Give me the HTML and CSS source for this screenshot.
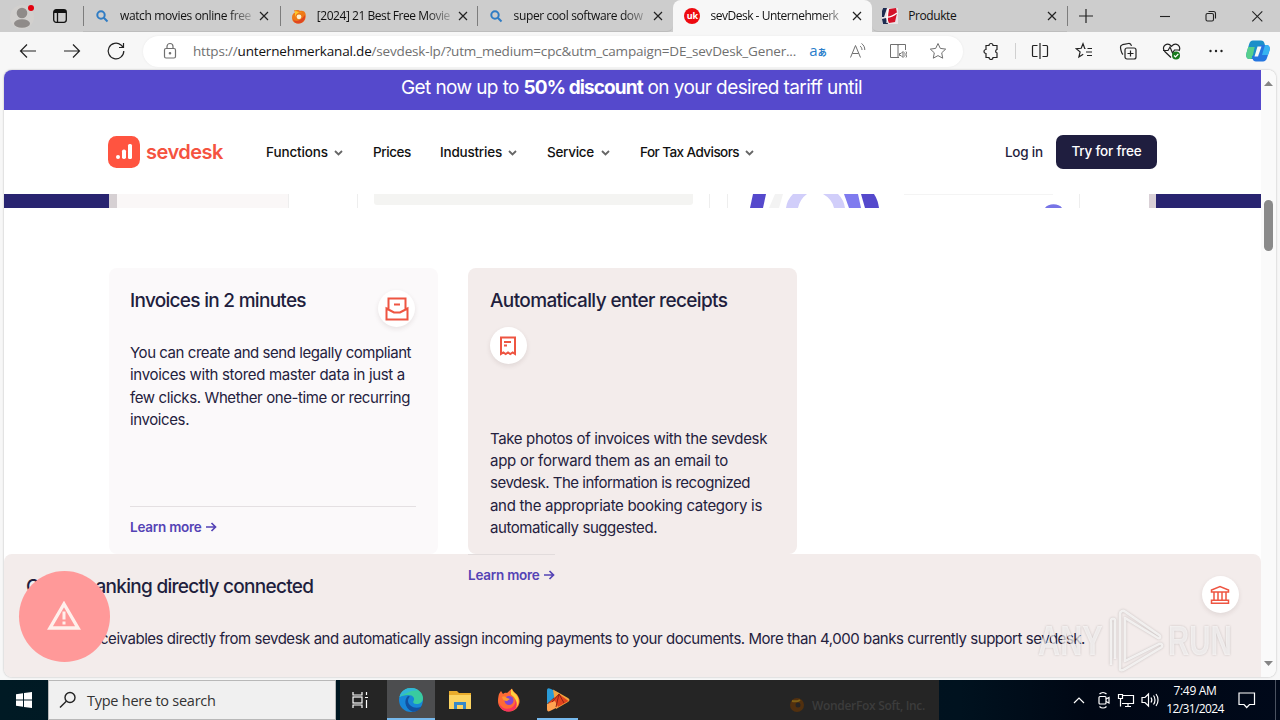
FILE: index.html
```html
<!DOCTYPE html>
<html lang="en">
<head>
<meta charset="utf-8">
<title>sevDesk - Unternehmerkanal</title>
<link rel="stylesheet" href="styles.css">
</head>
<body>
<header class="tabbar">
  <div class="profile">
    <svg width="28" height="28" viewBox="0 0 28 28"><circle cx="14" cy="15" r="12" fill="#d2d0ce"/><circle cx="14" cy="11" r="5.300" fill="#8f8b89"/><ellipse cx="14" cy="21.500" rx="8" ry="4.300" fill="#8f8b89"/><circle cx="23" cy="6" r="3" fill="#e3000f"/></svg>
  </div>
  <div class="workspaces">
    <svg width="16" height="16" viewBox="0 0 16 16" fill="none" stroke="#111" stroke-width="1.300"><rect x="1.700" y="1.700" width="12.600" height="12.600" rx="2.500"/><path d="M5.500 5v9"/><path d="M2 3.500h12" stroke-width="3"/></svg>
  </div>
  <div class="tab first">
    <svg class="fav" width="16" height="16" viewBox="0 0 16 16" fill="none" stroke="#2f7cc4" stroke-width="2"><circle cx="7" cy="7" r="3.700"/><path d="M9.800 9.800 13.500 13.500"/></svg>
    <span class="label t1">watch movies online free</span>
    <svg class="x" width="10" height="10" viewBox="0 0 10 10"><path d="M1 1l8 8M9 1l-8 8"/></svg>
  </div>
  <div class="tab">
    <svg class="fav" width="16" height="16" viewBox="0 0 16 16"><path d="M3 2c3 1 4-1 6 1 5-1 6.500 3 5.500 7-1 4-4 5.500-7 5.500C3 15.500 1 13 1 9.500 1 7 2 5.500 4 4.500z" fill="#ee7a18"/><path d="M2 11c2 3 7 3 12-4 1 5-3 8.500-6.500 8.500C4.500 15.500 2.500 14 2 11z" fill="#e04622"/><circle cx="8" cy="8.800" r="2.400" fill="#fff3d0"/><path d="M4 3c3 0 4 2 7 1-4 0-6 2-7 5z" fill="#ffc928"/></svg>
    <span class="label t2">[2024] 21 Best Free Movie</span>
    <svg class="x" width="10" height="10" viewBox="0 0 10 10"><path d="M1 1l8 8M9 1l-8 8"/></svg>
  </div>
  <div class="tab last-idle">
    <svg class="fav" width="16" height="16" viewBox="0 0 16 16" fill="none" stroke="#2f7cc4" stroke-width="2"><circle cx="7" cy="7" r="3.700"/><path d="M9.800 9.800 13.500 13.500"/></svg>
    <span class="label t3">super cool software dow</span>
    <svg class="x" width="10" height="10" viewBox="0 0 10 10"><path d="M1 1l8 8M9 1l-8 8"/></svg>
  </div>
  <div class="tab active">
    <span class="fav uk">uk</span>
    <span class="label t4">sevDesk - Unternehmerk</span>
    <svg class="x" width="10" height="10" viewBox="0 0 10 10"><path d="M1 1l8 8M9 1l-8 8"/></svg>
  </div>
  <div class="tab right">
    <svg class="fav" width="16" height="16" viewBox="0 0 16 16"><path d="M0 0h16v16H0z" fill="#e9e3e6"/><path d="M1 0h4L2 9H0V3zM0 11l4-1 2 6H1z" fill="#1d2c50"/><path d="M7 1l7-1 1 5-2 9-6 1-2-5z" fill="#d41228"/><path d="M4 9c4 1 7-1 11-4M6 1 5 15" stroke="#fff" stroke-width="1.200" fill="none"/></svg>
    <span class="label t5">Produkte</span>
    <svg class="x" width="10" height="10" viewBox="0 0 10 10"><path d="M1 1l8 8M9 1l-8 8"/></svg>
  </div>
  <div class="newtab"><svg width="16" height="16" viewBox="0 0 16 16" stroke="#222" stroke-width="1.200"><path d="M8 1v14M1 8h14"/></svg></div>
  <div class="winbtns">
    <svg width="46" height="32" viewBox="0 0 46 32"><path d="M18 16.500h10"/></svg>
    <svg width="46" height="32" viewBox="0 0 46 32"><rect x="18" y="13.500" width="7.500" height="7.500" rx="1.500"/><path d="M20.500 11.500h5a2 2 0 0 1 2 2v5"/></svg>
    <svg width="46" height="32" viewBox="0 0 46 32"><path d="M18.300 11.300l10 10M28.300 11.300l-10 10"/></svg>
  </div>
</header>

<div class="toolbar">
  <span class="tool"><svg width="20" height="20" viewBox="0 0 20 20"><path d="M18 10H2.500M9 3.500 2.500 10 9 16.500"/></svg></span>
  <span class="tool"><svg width="20" height="20" viewBox="0 0 20 20"><path d="M2 10h15.500M11 3.500l6.500 6.500-6.500 6.500"/></svg></span>
  <span class="tool"><svg width="20" height="20" viewBox="0 0 20 20"><path d="M17.800 10A7.800 7.800 0 1 1 15 4l2 2M17.500 2v4.500H13"/></svg></span>
  <div class="address">
    <svg class="lock" width="16" height="18" viewBox="0 0 16 18"><rect x="2.500" y="6.500" width="11" height="9.500" rx="1.500"/><path d="M5 6.500V4.500a3 3 0 0 1 6 0v2"/><circle cx="8" cy="11.300" r=".7"/></svg>
    <span class="url">https://<b>unternehmerkanal.de</b>/sevdesk-lp/?utm_medium=cpc&amp;utm_campaign=DE_sevDesk_Gener...</span>
    <span class="act translate"><i>a</i><i class="jp">あ</i></span>
    <span class="act"><svg width="18" height="18" viewBox="0 0 18 18"><path d="M1.500 15.500 6.500 3.500l5 12M3.300 11.500h6.400M11 4c1.300 1 2 2.300 2 4M12.500 1.500c2.200 1.500 3.300 3.700 3.300 6.500"/></svg></span>
    <span class="act"><svg width="18" height="18" viewBox="0 0 18 18"><path d="M9 3v12.500H1.500V2.500H9M9 3.500V2.500h7.500V8M9 15.500h1"/><path d="M10.500 11.500h1.500l2-2v6l-2-2h-1.500zM15.500 10.500c.8 1 .8 3 0 4M17 9.500c1.200 1.500 1.200 4.500 0 6"/></svg></span>
    <span class="act"><svg width="18" height="18" viewBox="0 0 18 18"><path d="M9 1.500l2.300 4.900 5.400.7-4 3.700 1 5.400L9 13.600l-4.700 2.600 1-5.400-4-3.700 5.400-.7z"/></svg></span>
  </div>
  <span class="tool ext"><svg width="18" height="18" viewBox="0 0 18 18"><path d="M4 3.500h3a2 2 0 0 1 4 0h4v4a1.800 1.800 0 0 0 0 3.500v4.500h-4a2 2 0 0 1-4 0H4V11.500a2 2 0 0 1 0-4z"/></svg></span>
  <span class="sep"></span>
  <span class="tool"><svg width="18" height="18" viewBox="0 0 18 18"><path d="M6.500 3.500h-4a1 1 0 0 0-1 1v9a1 1 0 0 0 1 1h4M11.500 3.500h4a1 1 0 0 1 1 1v9a1 1 0 0 1-1 1h-4M9 1v16"/></svg></span>
  <span class="tool"><svg width="18" height="18" viewBox="0 0 18 18"><path d="M10.500 6.500h-.8L8 1.800 6.200 6.300l-4.900.4 3.800 3.200L3.900 15l4.300-2.800M12.500 6.500h4.500M11 10h6M12 13.500h5"/></svg></span>
  <span class="tool"><svg width="18" height="18" viewBox="0 0 18 18"><rect x="6" y="6" width="11" height="11" rx="2"/><path d="M11.500 8.500v6M8.500 11.500h6M4 12.500c-1.500-1-2.500-5.500-2.500-7.500C1.500 3.500 2.500 3 3.500 2.700l6-1.200c1.500-.2 2.500.5 3 2.300"/></svg></span>
  <span class="tool"><svg width="20" height="18" viewBox="0 0 20 18"><path d="M9 15.500 3 9.800C.8 7.500 1 4.500 3.200 3c2-1.400 4.500-.8 6.300 1.300C11.300 2.200 14 1.600 16 3c1.800 1.500 2.200 3.700 1 6M1 8.500h5l2-3.500 2.500 6L12.500 8H17"/><circle cx="14" cy="13.500" r="4" fill="#187a1d" stroke="none"/><path d="M12 13.500l1.500 1.500 2.800-3" stroke="#fff"/></svg></span>
  <span class="tool"><svg width="18" height="18" viewBox="0 0 18 18"><g fill="#222" stroke="none"><circle cx="3.500" cy="9" r="1.200"/><circle cx="9" cy="9" r="1.200"/><circle cx="14.500" cy="9" r="1.200"/></g></svg></span>
  <span class="tool copilot"><svg width="26" height="24" viewBox="0 0 26 24"><g stroke="none"><path d="M8 1.500h8c2 0 3 1 3.500 3L20.500 8h-4c-2 0-3 1-3.500 3l-2 6c-.6 2-1.500 3-3 3H5c-3 0-4.500-2-3.500-6L4 5.500C4.700 3 6 1.500 8 1.500z" fill="#1b8fc9"/><path d="M1.500 14 3.200 8h6.500l-2 9c-.4 2-1.200 3-2.700 3-3 0-4.500-2-3.500-6z" fill="#57cf8c"/><path d="M18 22.500h-7c-2 0-3-1-3.500-3L6.800 17c2.500 0 3.500-1 4.200-3l2.300-6c.6-1.500 1.700-2 3.200-2H21c3 0 4.500 2 3.500 5.500L22 19c-.7 2.300-2 3.500-4 3.500z" fill="#2576e0"/><path d="M20 6h1c3 0 4.500 2 3.500 5.500L23 16h-6z" fill="#36b3f1"/><path d="M12.500 7.500h4l-3.500 10H9.500z" fill="#f7f7f7"/></g></svg></span>
</div>

<main class="viewport">
  <div class="page">
    <div class="promo"><span>Get now up to <b>50% discount</b> on your desired tariff until</span></div>
    <nav class="nav">
      <svg class="mark" width="32" height="32" viewBox="0 0 32 32"><rect width="32" height="32" rx="8.500" fill="#ff5440"/><g fill="#fff"><rect x="8" y="19" width="4" height="4" rx="2"/><rect x="14" y="13.500" width="4" height="9.500" rx="1.800"/><rect x="20" y="8" width="4" height="15" rx="1.500"/></g></svg>
      <span class="brand">sevdesk</span>
      <a class="item n1">Functions</a><svg class="chev" width="9" height="6" viewBox="0 0 9 6"><path d="M1 1l3.500 3.500L8 1"/></svg>
      <a class="item n2">Prices</a>
      <a class="item n3">Industries</a><svg class="chev" width="9" height="6" viewBox="0 0 9 6"><path d="M1 1l3.500 3.500L8 1"/></svg>
      <a class="item n4">Service</a><svg class="chev" width="9" height="6" viewBox="0 0 9 6"><path d="M1 1l3.500 3.500L8 1"/></svg>
      <a class="item n5">For Tax Advisors</a><svg class="chev" width="9" height="6" viewBox="0 0 9 6"><path d="M1 1l3.500 3.500L8 1"/></svg>
      <a class="login">Log in</a>
      <a class="try">Try for free</a>
    </nav>
    <svg class="hero" width="1257" height="14" viewBox="0 0 1257 14">
      <rect width="1257" height="14" fill="#fff"/>
      <rect width="106" height="14" fill="#282470"/><rect x="105" width="8" height="14" fill="#d6d0d3"/><rect x="113" width="172" height="14" fill="#faf7f7"/>
      <path d="M284.500 0v14M353.500 0v14M705.500 0v14M723.500 0v14M1075.500 0v14" stroke="#eeeeee"/>
      <rect x="370" y="-4" width="319" height="15" rx="3" fill="#f4f4f2"/>
      <path d="M749 0h13l-3 14h-13z" fill="#5549cc"/><path d="M771 0h8l-4 14h-10z" fill="#f3f3f3"/>
      <path d="M789 0h14q-7 5-9 14h-12q1-8 7-14z" fill="#d1cefa"/><path d="M819 0h15q6 6 7 14h-11q-2-9-11-14z" fill="#d1cefa"/>
      <path d="M840 0h14l3 14h-12z" fill="#7f7bef"/><path d="M857 0h13q4 6 5 14h-14z" fill="#5549cc"/>
      <path d="M900 .5h149" stroke="#f4f4f4"/><path d="M1041 14c3-5 14-5 17 0z" fill="#7774e6"/>
      <rect x="1145" width="8" height="14" fill="#d9d0d6"/><rect x="1152" width="105" height="14" fill="#282470"/>
    </svg>
    <div class="cards">
      <article class="card light">
        <div class="head">
          <h3 class="h1">Invoices in 2 minutes</h3>
          <span class="bubble"><svg width="24" height="26" viewBox="0 0 24 26"><path d="M3.500 13V2.500h17V13M1.500 12.500 9 16.500h6l7.500-4V23.500h-21zM9 8.500h6"/></svg></span>
        </div>
        <p><span class="p1">You can create and send legally compliant</span><span class="p2">invoices with stored master data in just a</span><span class="p3">few clicks. Whether one-time or recurring</span><span class="p3">invoices.</span></p>
        <a class="more">Learn more <svg width="11" height="10" viewBox="0 0 11 10"><path d="M0 5h9.500M5.500 1l4 4-4 4"/></svg></a>
      </article>
      <article class="card tinted">
        <h3 class="h2">Automatically enter receipts</h3>
        <span class="bubble"><svg width="18" height="20" viewBox="0 0 18 20"><path d="M2 1.500h14V18l-2.300-1.500L11.300 18 9 16.500 6.700 18l-2.400-1.500L2 18zM5 6h7M5 9.500h3"/></svg></span>
        <p><span class="q1">Take photos of invoices with the sevdesk</span><span class="q2">app or forward them as an email to</span><span class="q3">sevdesk. The information is recognized</span><span class="q4">and the appropriate booking category is</span><span class="q5">automatically suggested.</span></p>
        <a class="more overlap">Learn more <svg width="11" height="10" viewBox="0 0 11 10"><path d="M0 5h9.500M5.500 1l4 4-4 4"/></svg></a>
      </article>
    </div>
    <section class="bank">
      <div class="head">
        <h3 class="h3">Online banking directly connected</h3>
        <span class="bubble"><svg width="20" height="20" viewBox="0 0 20 20" class="thin"><path d="M1.500 7V5L10 1.500 18.500 5v2zM4 7v8M8 7v8M12 7v8M16 7v8M1.500 15.200h17v3h-17z"/></svg></span>
      </div>
      <p><span class="lead">Collect re</span>ceivables directly from sevdesk and automatically assign incoming payments to your documents. More than 4,000 banks currently support sevdesk.</p>
    </section>
  </div>
  <div class="scroll">
    <svg width="9" height="5" viewBox="0 0 9 5"><path d="M0 5 4.500 0 9 5z" fill="#858585"/></svg>
    <span class="thumb"></span>
    <svg class="down" width="9" height="5" viewBox="0 0 9 5"><path d="M0 0 4.500 5 9 0z" fill="#858585"/></svg>
  </div>
  <div class="alert"><svg width="34" height="30" viewBox="0 0 34 30"><path d="M17 3 31 27H3z" fill="none" stroke="#fff0ec" stroke-width="3.400"/><path d="M17 10.500v8M17 20.500v3" stroke="#fff0ec" stroke-width="3"/></svg></div>
  <div class="watermark"><span>ANY</span>
    <svg width="60" height="66" viewBox="0 0 60 66" fill="none" stroke-linejoin="round"><path d="M5 57V13c0-3 4-3 4 0v38M14 61V6c0-3 3-4 5-2.500L53 27c2 1.500 1 4-1 3L19 10v43l34-17c3-1 4 2 2 3.500L19 61c-2 1.500-5 2-5 0"/></svg>
    <span class="run">RUN</span></div>
</main>

<footer class="taskbar">
  <span class="start"><svg width="16" height="16" viewBox="0 0 16 16" fill="#fff"><path d="M0 2.300 7 1.300v6.200H0zM8 1.100 16 0v7.500H8zM0 8.500h7v6.200l-7-1zM8 8.500h8V16l-8-1.100z"/></svg></span>
  <div class="search"><svg width="18" height="18" viewBox="0 0 18 18" fill="none" stroke="#222" stroke-width="1.400"><circle cx="11" cy="6.500" r="5"/><path d="M7.300 10.200 1 16.500"/></svg><span>Type here to search</span></div>
  <div class="apps">
    <span class="app"><svg width="18" height="18" viewBox="0 0 18 18" fill="none" stroke="#fff" stroke-width="1.200"><path d="M2 1v3h9V1M2 17v-3h9v3"/><rect x="2" y="6" width="9" height="6"/><path d="M15.500 1v3M15.500 9v8M14 6.500h3"/></svg></span>
    <span class="app current"><svg width="26" height="26" viewBox="0 0 26 26"><circle cx="13" cy="13" r="12" fill="#1786d8"/><path d="M1.500 10C3 4 8 1 13 1c7 0 12 5 12 10 0 4-3 6-6.500 6-3 0-4-1.500-3-3 2-3-1-6-5-6-4 0-7 1-9 2z" fill="#39cba0"/><path d="M1.500 10C3 4 8 1 13 1c3 0 5 .8 7 2.300C14 3 8 6 1.500 10z" fill="#31b6d8"/><path d="M10 9c-4 3-4 12 4 15.500 4 1 8-2 9.500-5-6 3-13 0-13.500-5.500 0-2 1-4 2-4.500z" fill="#1251a0"/></svg></span>
    <span class="app"><svg width="22" height="20" viewBox="0 0 22 20"><path d="M0 1h8l2 2h12v16H0z" fill="#e9ac2c"/><path d="M0 5h22v14H0z" fill="#fcd462"/><path d="M5 19v-7h12v7h-3v-4H8v4z" fill="#3789c9"/></svg></span>
    <span class="app"><svg width="24" height="24" viewBox="0 0 24 24"><path d="M2 6l2-3 2 3c1-1 3-1.500 4-1l5-4.500c1 3 3 4 5 6 3 4 3.500 8 1 12-2 3.500-5.500 5-9 5C5 23.500 1 18.500 1 13c0-3 .5-5 1-7z" fill="#ff6a35"/><path d="M14 1l1 .5c1 3 4 4 5.500 7 2.500 5 .5 9-1.500 11 1-7-1-10-5-13z" fill="#ffd13d"/><path d="M2 15c2 5 7 7 12 5 4-2 5-6 4-9 3 4 2 9-2 11.500-6 3-13-.5-14-7.500z" fill="#f7335f"/><circle cx="12" cy="12.500" r="4.500" fill="#8246d4"/><path d="M5 9c2-1 4 0 5 1l3 1-3 2c-3 0-4-1-5-4z" fill="#ff9730"/></svg></span>
    <span class="app running"><svg width="26" height="26" viewBox="0 0 26 26"><path d="M2 4c0-3 1-3.500 4-2l8 4L2 17z" fill="#2a9bd7"/><path d="M8 2.500 23 11c2 1 2 3 0 4L11 22z" fill="#f3a43d"/><path d="M3 16 14 7 23.500 14 11 21z" fill="#e2431e"/><path d="M2 17l8-3 3 6-8 4c-2 1-3 0-3-2z" fill="#ffa351"/><path d="M14 7 11 20M14 7l5 9M14 7 7 15" stroke="#8d2516" fill="none"/></svg></span>
    <span class="ghost"><svg width="16" height="16" viewBox="0 0 16 16"><circle cx="8" cy="8" r="7" fill="#51300f"/><circle cx="9" cy="8" r="2.500" fill="#252525"/><path d="M3 4q5 1 8-1" stroke="#806015" stroke-width="2" fill="none"/></svg><span>WonderFox Soft, Inc.</span></span>
  </div>
  <div class="tray">
    <svg width="12" height="8" viewBox="0 0 12 8"><path d="M1 7l5-5 5 5"/></svg>
    <svg width="14" height="18" viewBox="0 0 14 18"><rect x="2" y="5.500" width="7" height="7.500" rx="1"/><path d="M9 8l3-1.500v5.500L9 10.500M2.500 3C4.500 1 7.500 1 9.500 3M2.500 15.500c2 2 5 2 7 0"/></svg>
    <svg width="18" height="16" viewBox="0 0 18 16"><path d="M6 3.500h10.500v8H5M8 14.500h6M11 11.500v3M1.500 2.500h4v4h-4zM3.500 6.500v8"/></svg>
    <svg width="18" height="16" viewBox="0 0 18 16"><path d="M1 5.500h3L7.500 2v12L4 10.500H1zM10 5.500c1 1.500 1 3.500 0 5M12.500 3.500c2 2.500 2 6.500 0 9M15 2c2.700 3.500 2.700 8.500 0 12"/></svg>
    <div class="clock"><span class="time">7:49 AM</span><span class="date">12/31/2024</span></div>
    <svg class="notes" width="18" height="17" viewBox="0 0 18 17"><path d="M1 1h15.500v11.500h-5L8.700 15.500 6 12.500H1z"/></svg>
  </div>
</footer>
</body>
</html>
```
FILE: styles.css
```css
* { box-sizing: border-box; }
body { margin: 0; width: 1280px; height: 720px; overflow: hidden; display: flex; flex-direction: column; background: #f7f7f7; font-family: "Inter", "Liberation Sans", sans-serif; }
svg { display: block; flex: none; }
h3, p { margin: 0; font-weight: 400; }

/* Browser tabs */
.tabbar { height: 32px; flex: none; display: flex; background: #cdcdcd; font: 12px/32px "Open Sans", "Noto Sans", sans-serif; color: #111; }
.profile { width: 45px; padding: 2px 0 0 8px; }
.workspaces { width: 38px; padding: 8px 0 0 7px; }
.tab { width: 197px; height: 32px; display: flex; align-items: center; padding: 0 10px 0 10px; position: relative; border-bottom: 1px solid #bdbdbd; }
.tab.first { width: 198px; padding-left: 11px; padding-right: 12px; }
.tab::before { content: ""; position: absolute; left: -1px; top: 6px; width: 1px; height: 20px; background: #7d7d7d; }
.tab.first::before { left: 0; }
.tab.active::before, .tab.right::before { display: none; }
.tab.active { background: #f7f7f7; border: 0; border-radius: 8px 8px 0 0; width: 199px; padding-left: 11px; }
.tab.last-idle { width: 196px; border-radius: 0 0 6px 0; }
.tab.right { width: 195px; border-radius: 0 0 0 6px; padding-left: 10px; }
.fav { width: 16px; height: 16px; margin-right: 10px; flex: none; }
.uk { background: #ee0a10; border-radius: 50%; color: #fff; font: 700 9px/15px "Open Sans", sans-serif; text-align: center; }
.label { flex: 1; overflow: hidden; white-space: nowrap; margin-right: 7px; -webkit-mask-image: linear-gradient(90deg, #000 82%, rgba(0,0,0,.2)); mask-image: linear-gradient(90deg, #000 82%, rgba(0,0,0,.2)); }
.t1, .t3 { letter-spacing: -.36px; }
.t2 { letter-spacing: -.45px; }
.t4 { letter-spacing: -.48px; }
.t5 { letter-spacing: -.42px; -webkit-mask: none; mask: none; }
.x { stroke: #222; stroke-width: 1.2; }
.newtab { width: 75px; padding: 2px 0 0 10px; border-left: 1px solid #7d7d7d; height: 20px; margin-top: 6px; }
.winbtns { display: flex; fill: none; stroke: #222; stroke-width: 1.1; }

/* Navigation bar */
.toolbar { height: 38px; flex: none; display: flex; align-items: center; padding-left: 6px; fill: none; stroke: #222; stroke-width: 1.2; }
.tool { width: 44px; display: flex; justify-content: center; flex: none; }
.tool.ext { margin-left: 6px; }
.tool.copilot { width: 40px; }
.sep { width: 1px; height: 16px; background: #d0d0d0; margin: 0 2px; }
.address { width: 820px; height: 31px; margin-left: 5px; border-radius: 16px; background: #fff; display: flex; align-items: center; padding: 0 5px 0 18px; stroke: #707070; box-shadow: 0 0 2px #e6e6e6; }
.url { width: 619px; margin-right: 2px; padding-left: 16px; font: 13.5px/30px "Open Sans", "Noto Sans", sans-serif; letter-spacing: -.18px; color: #707070; white-space: nowrap; }
.url b { font-weight: 400; color: #111; }
.lock { margin-left: 1px; margin-right: -1px; }
.act { width: 40px; display: flex; justify-content: center; flex: none; stroke-width: 1; }
.translate { color: #2a7ecb; font: 15px/18px "Open Sans", "Noto Sans CJK JP", sans-serif; align-items: baseline; padding-bottom: 3px; }
.translate i { font-style: normal; }
.translate .jp { font: 700 9px/12px "Noto Sans CJK JP", sans-serif; }

/* Page viewport */
.viewport { height: 607px; flex: none; margin-left: 4px; width: 1272px; display: flex; background: #fff; border-radius: 8px; overflow: hidden; position: relative; box-shadow: 0 0 2px #aaa; }
.page { width: 1257px; display: flex; flex-direction: column; color: #1f1d3d; }
.scroll { width: 15px; background: #fafafa; display: flex; flex-direction: column; align-items: center; padding: 11px 0; }
.thumb { width: 9px; height: 51px; border-radius: 5px; background: #8a8a8a; margin: 114px 0 auto; }
.promo { height: 40px; flex: none; background: #5549cc; color: #fff; font-size: 19px; line-height: 36px; letter-spacing: -.6px; text-align: center; white-space: pre; padding-right: 2px; }
.promo b { letter-spacing: -.9px; }
.nav { height: 84px; flex: none; display: flex; align-items: center; padding: 0 104px; font-size: 13.5px; font-weight: 500; color: #111; white-space: nowrap; }
.brand { width: 120px; margin: 0 0 0 6px; color: #f5533f; font-size: 20px; font-weight: 600; letter-spacing: -.5px; padding-bottom: 1px; }
.item, .login { padding-bottom: 1px; }
.n1 { width: 62px; letter-spacing: -.12px; }
.n2 { width: 38px; letter-spacing: -.42px; margin-right: 29px; }
.n3 { width: 62px; letter-spacing: -.21px; }
.n4 { width: 48px; letter-spacing: -.28px; }
.n5 { width: 99px; letter-spacing: -.56px; }
.chev { margin: 2px 30px 0 6px; fill: none; stroke: #666; stroke-width: 1.8; }
.login { margin-left: auto; letter-spacing: -.2px; color: #1f1d3d; }
.try { width: 101px; height: 34px; margin-left: 13px; border-radius: 7px; background: #1f1e3f; color: #fff; line-height: 33px; text-align: center; letter-spacing: -.21px; }

/* Feature cards */
.cards { padding: 60px 105px 0; display: flex; gap: 30px; height: 346px; flex: none; }
.card { width: 329px; border-radius: 8px; padding: 20px 22px 0 21px; position: relative; display: flex; flex-direction: column; }
.light { background: #fbf9fa; }
.tinted { background: #f3eceb; padding-left: 22px; }
.head { display: flex; justify-content: space-between; }
h3 { font-size: 19px; font-weight: 500; line-height: 26px; white-space: nowrap; color: #211e3d; }
.h1, .h3 { letter-spacing: -.71px; }
.h2 { letter-spacing: -.63px; }
.bubble { width: 37px; height: 37px; border-radius: 50%; background: #fff; box-shadow: 0 2px 5px rgba(60,30,30,.1); display: flex; align-items: center; justify-content: center; fill: none; stroke: #ee5542; stroke-width: 2; flex: none; }
.light .bubble { margin: 2px 1px 0 0; }
.thin { stroke-width: 1.5; }
.bank .bubble .thin { margin-right: 2px; }
p { font-size: 15px; line-height: 22.3px; white-space: nowrap; color: #24213d; }
p > span { display: block; }
.light p { margin-top: 15px; }
.p1 { letter-spacing: -.446px; }
.p2 { letter-spacing: -.32px; }
.p3 { letter-spacing: -.39px; }
.tinted .bubble { margin-top: 13px; }
.tinted .bubble svg { margin-right: 1px; }
.tinted p { margin-top: 64px; line-height: 22.2px; }
.q1 { letter-spacing: -.357px; }
.q2 { letter-spacing: -.26px; }
.q3 { letter-spacing: -.487px; }
.q4 { letter-spacing: -.3px; }
.q5 { letter-spacing: -.42px; }
.more { display: flex; align-items: center; gap: 4px; font-size: 13.5px; font-weight: 600; letter-spacing: -.25px; color: #5443b5; line-height: 40px; border-top: 1px solid #e4e0e2; white-space: nowrap; fill: none; stroke: #5443b5; stroke-width: 1.7; }
.light .more { margin-top: auto; margin-bottom: 7px; }
.more.overlap { position: absolute; left: 0; top: 286px; z-index: 2; border-color: #e2dcdc; }
.bank { flex: 1; background: #f3eceb; border-radius: 8px 8px 0 0; padding: 19px 22px 0; }
.bank .bubble { margin-top: 3px; }
.bank h3 { margin-top: 1px; }
.bank p { margin-top: 15px; letter-spacing: -.459px; }
.bank .lead { display: inline-block; width: 74px; letter-spacing: 0; }

/* Floating layers */
.alert { position: absolute; left: 14.5px; top: 500.5px; width: 91px; height: 91px; border-radius: 50%; background: #ff9999; display: flex; align-items: center; justify-content: center; z-index: 3; }
.watermark { position: absolute; left: 1034px; top: 538px; z-index: 3; display: flex; align-items: center; color: rgba(255,255,255,.65); font: 700 42px/66px "Liberation Sans", sans-serif; filter: drop-shadow(0 0 1px rgba(80,70,70,.4)); }
.watermark span { display: block; width: 64px; transform: scaleX(.73); transform-origin: 0 50%; }
.watermark svg { stroke: rgba(255,255,255,.7); stroke-width: 2.5; margin-left: 4px; }
.watermark .run { width: 66px; margin-left: 2px; transform: scaleX(.7); }

/* Windows taskbar */
.taskbar { height: 40px; flex: none; margin-top: 3px; display: flex; background: linear-gradient(90deg, #001a24, #00121f 75%, #000714 85%, #00091a); font-family: "Open Sans", "Noto Sans", sans-serif; }
.start { width: 48px; display: flex; align-items: center; justify-content: center; }
.search { width: 288px; background: #f0f0f0; border: 1px solid #b8b8b8; display: flex; align-items: center; padding-left: 10px; gap: 10px; font-size: 14.5px; letter-spacing: -.25px; color: #333; }
.apps { width: 599px; margin-left: 4px; background: #252525; display: flex; }
.app { width: 48px; display: flex; align-items: center; justify-content: center; margin-right: 1px; }
.app:first-child { width: 40px; margin-right: 7px; }
.current { background: #4c4d4f; box-shadow: inset 0 -2px #76b9ed; }
.running { width: 41px; margin-left: 3px; box-shadow: inset 0 -2px #76b9ed; }
.ghost { display: flex; align-items: center; gap: 7px; margin-left: auto; padding: 10px 14px 0 0; font-size: 12px; font-weight: 600; letter-spacing: -.31px; color: #3c3c3c; }
.tray { flex: 1; display: flex; align-items: center; padding-left: 134px; fill: none; stroke: #fff; stroke-width: 1.2; color: #fff; border-right: 1px solid #4a5260; margin-right: 4px; }
.tray > svg { margin-right: 6px; }
.tray > svg:first-child { margin-right: 12px; }
.clock { width: 60px; font-size: 12px; line-height: 18px; display: flex; flex-direction: column; align-items: center; margin-right: 13px; }
.tray .notes { margin: 0; }
.time { letter-spacing: -.32px; }
.date { letter-spacing: -.62px; }
```
